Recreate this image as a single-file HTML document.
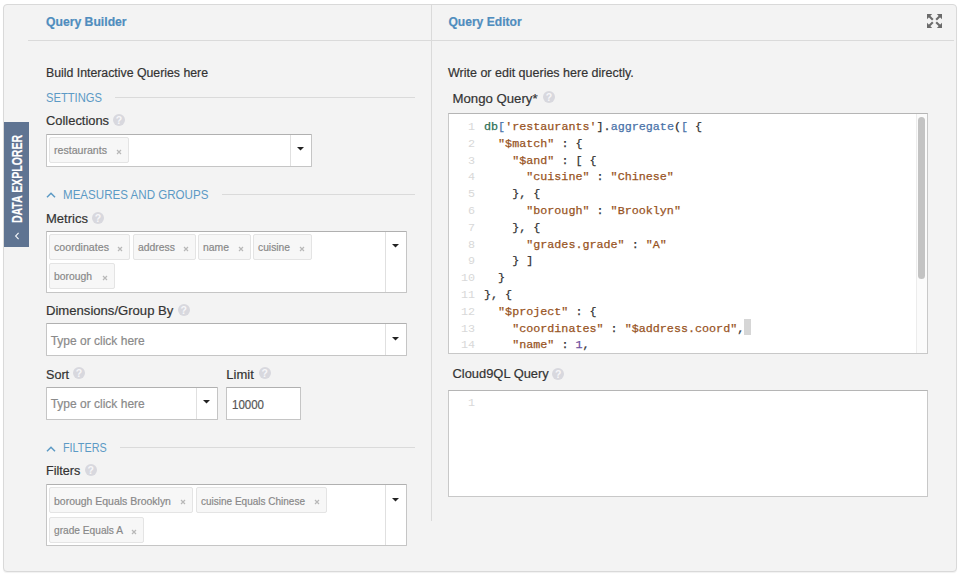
<!DOCTYPE html>
<html><head><meta charset="utf-8">
<style>
html,body{margin:0;padding:0;background:#fff;}
body{width:960px;height:574px;position:relative;overflow:hidden;font-family:"Liberation Sans",sans-serif;}
.t{position:absolute;white-space:nowrap;-webkit-text-stroke:0.2px currentColor;}
.b{position:absolute;}
.cl{position:absolute;left:484px;-webkit-text-stroke:0.25px currentColor;font-family:"Liberation Mono",monospace;font-size:11.72px;line-height:16.8px;white-space:pre;}
.ln{position:absolute;left:450px;width:25px;text-align:right;font-family:"Liberation Mono",monospace;font-size:11.72px;line-height:16.8px;color:#d8d8d8;}
</style></head><body>
<div class="b" style="left:3px;top:4px;width:954px;height:568px;background:#f3f3f3;border:1px solid #d9d9d9;border-radius:4px;box-sizing:border-box;box-shadow:0 1px 1px rgba(0,0,0,0.06);"></div>
<div class="b" style="left:28px;top:40px;width:926px;height:1px;background:#dadada;"></div>
<div class="b" style="left:431px;top:5px;width:1px;height:516px;background:#dadada;"></div>
<div class="b" style="left:4px;top:122px;width:25px;height:125px;background:#5f7492;"></div>
<div class="t" style="left:17px;top:179px;width:0;height:0;"><div style="position:absolute;left:0;top:0;transform:translate(-50%,-50%) rotate(-90deg) scaleX(0.727);white-space:nowrap;font:bold 14.5px/15px 'Liberation Sans',sans-serif;color:#fff;">DATA EXPLORER</div></div>
<svg class="b" style="left:14px;top:231.5px" width="6" height="8" viewBox="0 0 6 8"><path d="M4.6 0.8 L1.6 4 L4.6 7.2" fill="none" stroke="#f4f6f9" stroke-width="1.1"/></svg>
<div class="t" style="left:46px;top:16.47px;font-size:12.2px;line-height:12.2px;color:#4f8dbe;font-weight:bold;font-family:'Liberation Sans', sans-serif;">Query Builder</div>
<div class="t" style="left:448.4px;top:16.16px;font-size:12.1px;line-height:12.1px;color:#4f8dbe;font-weight:bold;font-family:'Liberation Sans', sans-serif;">Query Editor</div>
<svg class="b" style="left:927px;top:13.8px" width="15" height="14" viewBox="0 0 15 14">
<g fill="#6b6b6b" stroke="#6b6b6b">
<path d="M0 0 H5.2 L0 5.2 Z" stroke="none"/><path d="M1.5 1.5 L5.8 5.8" stroke-width="2.1"/>
<path d="M15 0 H9.8 L15 5.2 Z" stroke="none"/><path d="M13.5 1.5 L9.2 5.8" stroke-width="2.1"/>
<path d="M0 14 H5.2 L0 8.8 Z" stroke="none"/><path d="M1.5 12.5 L5.8 8.2" stroke-width="2.1"/>
<path d="M15 14 H9.8 L15 8.8 Z" stroke="none"/><path d="M13.5 12.5 L9.2 8.2" stroke-width="2.1"/>
</g></svg>
<div class="t" style="left:46px;top:66.89px;font-size:12.3px;line-height:12.3px;color:#333;font-family:'Liberation Sans', sans-serif;">Build Interactive Queries here</div>
<div class="t" style="left:46px;top:91.78px;font-size:12.9px;line-height:12.9px;color:#5c9ac5;font-family:'Liberation Sans', sans-serif;-webkit-text-stroke:0;transform:scaleX(0.8681);transform-origin:0 0;">SETTINGS</div>
<div class="b" style="left:115px;top:97px;width:300px;height:1px;background:#dadada;"></div>
<div class="t" style="left:46px;top:114.88px;font-size:12.9px;line-height:12.9px;color:#333;font-family:'Liberation Sans', sans-serif;">Collections</div>
<div class="b" style="left:113.0px;top:114.0px;width:12px;height:12px;border-radius:50%;background:#d8d8de;color:#f6f6f8;font:bold 10.5px/12.5px 'Liberation Sans',sans-serif;text-align:center;">?</div>
<div class="b" style="left:46px;top:134px;width:266px;height:33px;background:#fff;border:1px solid #c5c5c5;border-top-color:#b0b0b0;box-sizing:border-box;border-radius:1px;"></div>
<div class="b" style="left:290px;top:135px;width:1px;height:31px;background:#e0e0e0;"></div>
<svg class="b" style="left:297px;top:146.8px" width="7" height="4" viewBox="0 0 7 4"><path d="M0 0 H7 L3.5 3.6 Z" fill="#222"/></svg>
<div class="b" style="left:49px;top:137px;width:80px;height:26px;background:#f7f7f7;border:1px solid #e4e4e4;box-sizing:border-box;border-radius:2px;"></div>
<div class="t" style="left:54.0px;top:144.18px;font-size:11.6px;line-height:11.6px;color:#888888;font-family:'Liberation Sans', sans-serif;transform:scaleX(0.9133);transform-origin:0 0;">restaurants</div>
<svg class="b" style="left:116.2px;top:148.5px" width="6" height="6" viewBox="0 0 6 6"><path d="M1 1 L5 5 M5 1 L1 5" stroke="#b8b8b8" stroke-width="1.2"/></svg>
<svg class="b" style="left:45.7px;top:192.1px" width="10" height="6" viewBox="0 0 10 6"><path d="M1 5.2 L5 1.2 L9 5.2" fill="none" stroke="#5c9ac5" stroke-width="1.5"/></svg>
<div class="t" style="left:63px;top:188.63px;font-size:12.9px;line-height:12.9px;color:#5c9ac5;font-family:'Liberation Sans', sans-serif;-webkit-text-stroke:0;transform:scaleX(0.8981);transform-origin:0 0;">MEASURES AND GROUPS</div>
<div class="b" style="left:222px;top:194px;width:193px;height:1px;background:#dadada;"></div>
<div class="t" style="left:46px;top:211.80px;font-size:13px;line-height:13px;color:#333;font-family:'Liberation Sans', sans-serif;">Metrics</div>
<div class="b" style="left:92.0px;top:211.5px;width:12px;height:12px;border-radius:50%;background:#d8d8de;color:#f6f6f8;font:bold 10.5px/12.5px 'Liberation Sans',sans-serif;text-align:center;">?</div>
<div class="b" style="left:46px;top:231px;width:361px;height:62px;background:#fff;border:1px solid #c5c5c5;border-top-color:#b0b0b0;box-sizing:border-box;border-radius:1px;"></div>
<div class="b" style="left:385px;top:232px;width:1px;height:60px;background:#e0e0e0;"></div>
<svg class="b" style="left:392px;top:243.8px" width="7" height="4" viewBox="0 0 7 4"><path d="M0 0 H7 L3.5 3.6 Z" fill="#222"/></svg>
<div class="b" style="left:49px;top:234px;width:81px;height:26px;background:#f7f7f7;border:1px solid #e4e4e4;box-sizing:border-box;border-radius:2px;"></div>
<div class="t" style="left:54.0px;top:241.18px;font-size:11.6px;line-height:11.6px;color:#888888;font-family:'Liberation Sans', sans-serif;transform:scaleX(0.9171);transform-origin:0 0;">coordinates</div>
<svg class="b" style="left:117.2px;top:245.5px" width="6" height="6" viewBox="0 0 6 6"><path d="M1 1 L5 5 M5 1 L1 5" stroke="#b8b8b8" stroke-width="1.2"/></svg>
<div class="b" style="left:133px;top:234px;width:62.5px;height:26px;background:#f7f7f7;border:1px solid #e4e4e4;box-sizing:border-box;border-radius:2px;"></div>
<div class="t" style="left:137.5px;top:241.18px;font-size:11.6px;line-height:11.6px;color:#888888;font-family:'Liberation Sans', sans-serif;transform:scaleX(0.8966);transform-origin:0 0;">address</div>
<svg class="b" style="left:182.7px;top:245.5px" width="6" height="6" viewBox="0 0 6 6"><path d="M1 1 L5 5 M5 1 L1 5" stroke="#b8b8b8" stroke-width="1.2"/></svg>
<div class="b" style="left:198px;top:234px;width:52.6px;height:26px;background:#f7f7f7;border:1px solid #e4e4e4;box-sizing:border-box;border-radius:2px;"></div>
<div class="t" style="left:202.5px;top:241.18px;font-size:11.6px;line-height:11.6px;color:#888888;font-family:'Liberation Sans', sans-serif;transform:scaleX(0.8960);transform-origin:0 0;">name</div>
<svg class="b" style="left:237.79999999999998px;top:245.5px" width="6" height="6" viewBox="0 0 6 6"><path d="M1 1 L5 5 M5 1 L1 5" stroke="#b8b8b8" stroke-width="1.2"/></svg>
<div class="b" style="left:253px;top:234px;width:59px;height:26px;background:#f7f7f7;border:1px solid #e4e4e4;box-sizing:border-box;border-radius:2px;"></div>
<div class="t" style="left:257.5px;top:241.18px;font-size:11.6px;line-height:11.6px;color:#888888;font-family:'Liberation Sans', sans-serif;transform:scaleX(0.8862);transform-origin:0 0;">cuisine</div>
<svg class="b" style="left:299.2px;top:245.5px" width="6" height="6" viewBox="0 0 6 6"><path d="M1 1 L5 5 M5 1 L1 5" stroke="#b8b8b8" stroke-width="1.2"/></svg>
<div class="b" style="left:49px;top:263px;width:66px;height:26px;background:#f7f7f7;border:1px solid #e4e4e4;box-sizing:border-box;border-radius:2px;"></div>
<div class="t" style="left:54.0px;top:270.18px;font-size:11.6px;line-height:11.6px;color:#888888;font-family:'Liberation Sans', sans-serif;transform:scaleX(0.8926);transform-origin:0 0;">borough</div>
<svg class="b" style="left:102.2px;top:274.5px" width="6" height="6" viewBox="0 0 6 6"><path d="M1 1 L5 5 M5 1 L1 5" stroke="#b8b8b8" stroke-width="1.2"/></svg>
<div class="t" style="left:46px;top:303.71px;font-size:13.1px;line-height:13.1px;color:#333;font-family:'Liberation Sans', sans-serif;">Dimensions/Group By</div>
<div class="b" style="left:177.7px;top:304.0px;width:12px;height:12px;border-radius:50%;background:#d8d8de;color:#f6f6f8;font:bold 10.5px/12.5px 'Liberation Sans',sans-serif;text-align:center;">?</div>
<div class="b" style="left:46px;top:323px;width:361px;height:33px;background:#fff;border:1px solid #c5c5c5;border-top-color:#b0b0b0;box-sizing:border-box;border-radius:1px;"></div>
<div class="b" style="left:385px;top:324px;width:1px;height:31px;background:#e0e0e0;"></div>
<svg class="b" style="left:392px;top:336.8px" width="7" height="4" viewBox="0 0 7 4"><path d="M0 0 H7 L3.5 3.6 Z" fill="#222"/></svg>
<div class="t" style="left:50.7px;top:334.84px;font-size:12px;line-height:12px;color:#8a8a8a;font-family:'Liberation Sans', sans-serif;">Type or click here</div>
<div class="t" style="left:46px;top:368.53px;font-size:12.6px;line-height:12.6px;color:#333;font-family:'Liberation Sans', sans-serif;">Sort</div>
<div class="b" style="left:73.0px;top:367.3px;width:12px;height:12px;border-radius:50%;background:#d8d8de;color:#f6f6f8;font:bold 10.5px/12.5px 'Liberation Sans',sans-serif;text-align:center;">?</div>
<div class="t" style="left:226.3px;top:368.20px;font-size:13px;line-height:13px;color:#333;font-family:'Liberation Sans', sans-serif;">Limit</div>
<div class="b" style="left:258.7px;top:367.3px;width:12px;height:12px;border-radius:50%;background:#d8d8de;color:#f6f6f8;font:bold 10.5px/12.5px 'Liberation Sans',sans-serif;text-align:center;">?</div>
<div class="b" style="left:46px;top:387px;width:172px;height:33px;background:#fff;border:1px solid #c5c5c5;border-top-color:#b0b0b0;box-sizing:border-box;border-radius:1px;"></div>
<div class="b" style="left:196px;top:388px;width:1px;height:31px;background:#e0e0e0;"></div>
<svg class="b" style="left:203px;top:399.7px" width="7" height="4" viewBox="0 0 7 4"><path d="M0 0 H7 L3.5 3.6 Z" fill="#222"/></svg>
<div class="t" style="left:50.7px;top:398.44px;font-size:12px;line-height:12px;color:#8a8a8a;font-family:'Liberation Sans', sans-serif;">Type or click here</div>
<div class="b" style="left:226px;top:387px;width:74.5px;height:33px;background:#fff;border:1px solid #c5c5c5;border-top-color:#b0b0b0;box-sizing:border-box;"></div>
<div class="t" style="left:231.7px;top:398.83px;font-size:12.6px;line-height:12.6px;color:#555;font-family:'Liberation Sans', sans-serif;transform:scaleX(0.9133);transform-origin:0 0;">10000</div>
<svg class="b" style="left:45.7px;top:446.2px" width="10" height="6" viewBox="0 0 10 6"><path d="M1 5.2 L5 1.2 L9 5.2" fill="none" stroke="#5c9ac5" stroke-width="1.5"/></svg>
<div class="t" style="left:63px;top:442.08px;font-size:12.9px;line-height:12.9px;color:#5c9ac5;font-family:'Liberation Sans', sans-serif;-webkit-text-stroke:0;transform:scaleX(0.8390);transform-origin:0 0;">FILTERS</div>
<div class="b" style="left:120px;top:447px;width:295px;height:1px;background:#dadada;"></div>
<div class="t" style="left:46px;top:465.43px;font-size:12.6px;line-height:12.6px;color:#333;font-family:'Liberation Sans', sans-serif;">Filters</div>
<div class="b" style="left:84.8px;top:464.0px;width:12px;height:12px;border-radius:50%;background:#d8d8de;color:#f6f6f8;font:bold 10.5px/12.5px 'Liberation Sans',sans-serif;text-align:center;">?</div>
<div class="b" style="left:46px;top:484px;width:361px;height:62px;background:#fff;border:1px solid #c5c5c5;border-top-color:#b0b0b0;box-sizing:border-box;border-radius:1px;"></div>
<div class="b" style="left:385px;top:485px;width:1px;height:60px;background:#e0e0e0;"></div>
<svg class="b" style="left:392px;top:497.6px" width="7" height="4" viewBox="0 0 7 4"><path d="M0 0 H7 L3.5 3.6 Z" fill="#222"/></svg>
<div class="b" style="left:49px;top:487.4px;width:143.8px;height:26px;background:#f7f7f7;border:1px solid #e4e4e4;box-sizing:border-box;border-radius:2px;"></div>
<div class="t" style="left:54.0px;top:494.58px;font-size:11.6px;line-height:11.6px;color:#888888;font-family:'Liberation Sans', sans-serif;transform:scaleX(0.9027);transform-origin:0 0;">borough Equals Brooklyn</div>
<svg class="b" style="left:180.0px;top:498.9px" width="6" height="6" viewBox="0 0 6 6"><path d="M1 1 L5 5 M5 1 L1 5" stroke="#b8b8b8" stroke-width="1.2"/></svg>
<div class="b" style="left:196px;top:487.4px;width:131px;height:26px;background:#f7f7f7;border:1px solid #e4e4e4;box-sizing:border-box;border-radius:2px;"></div>
<div class="t" style="left:200.5px;top:494.58px;font-size:11.6px;line-height:11.6px;color:#888888;font-family:'Liberation Sans', sans-serif;transform:scaleX(0.8625);transform-origin:0 0;">cuisine Equals Chinese</div>
<svg class="b" style="left:314.2px;top:498.9px" width="6" height="6" viewBox="0 0 6 6"><path d="M1 1 L5 5 M5 1 L1 5" stroke="#b8b8b8" stroke-width="1.2"/></svg>
<div class="b" style="left:49px;top:517px;width:94.5px;height:26px;background:#f7f7f7;border:1px solid #e4e4e4;box-sizing:border-box;border-radius:2px;"></div>
<div class="t" style="left:54.0px;top:524.18px;font-size:11.6px;line-height:11.6px;color:#888888;font-family:'Liberation Sans', sans-serif;transform:scaleX(0.8770);transform-origin:0 0;">grade Equals A</div>
<svg class="b" style="left:130.7px;top:528.5px" width="6" height="6" viewBox="0 0 6 6"><path d="M1 1 L5 5 M5 1 L1 5" stroke="#b8b8b8" stroke-width="1.2"/></svg>
<div class="t" style="left:448px;top:67.22px;font-size:12.5px;line-height:12.5px;color:#333;font-family:'Liberation Sans', sans-serif;">Write or edit queries here directly.</div>
<div class="t" style="left:452.5px;top:92.13px;font-size:13.2px;line-height:13.2px;color:#333;font-family:'Liberation Sans', sans-serif;">Mongo Query*</div>
<div class="b" style="left:543.0px;top:91.0px;width:12px;height:12px;border-radius:50%;background:#d8d8de;color:#f6f6f8;font:bold 10.5px/12.5px 'Liberation Sans',sans-serif;text-align:center;">?</div>
<div class="b" style="left:448px;top:113px;width:480px;height:241px;background:#fff;border:1px solid #c8c8c8;border-top-color:#b5b5b5;box-sizing:border-box;"></div>
<div class="b" style="left:915.5px;top:114px;width:11px;height:239px;background:#fbfbfb;border-left:1px solid #ececec;box-sizing:border-box;"></div>
<div class="b" style="left:918.2px;top:116.7px;width:6.8px;height:162px;background:#c3c3c3;border-radius:4px;"></div>
<div class="b" style="left:0;top:0;width:960px;height:353px;overflow:hidden;clip-path:inset(114px 0 0 0);"><div class="cl" style="top:119.08px"><span style="color:#2e7056">db</span><span style="color:#4a72a8">[</span><span style="color:#98541f">&#x27;restaurants&#x27;</span><span style="color:#333">]</span><span style="color:#333">.</span><span style="color:#4a72a8">aggregate</span><span style="color:#333">(</span><span style="color:#4a72a8">[</span><span style="color:#333">&nbsp;</span><span style="color:#333">{</span></div><div class="ln" style="top:119.08px">1</div><div class="cl" style="top:135.88px"><span style="color:#333">&nbsp;&nbsp;</span><span style="color:#98541f">&quot;$match&quot;</span><span style="color:#333">&nbsp;:&nbsp;{</span></div><div class="ln" style="top:135.88px">2</div><div class="cl" style="top:152.68px"><span style="color:#333">&nbsp;&nbsp;&nbsp;&nbsp;</span><span style="color:#98541f">&quot;$and&quot;</span><span style="color:#333">&nbsp;:&nbsp;[&nbsp;{</span></div><div class="ln" style="top:152.68px">3</div><div class="cl" style="top:169.48px"><span style="color:#333">&nbsp;&nbsp;&nbsp;&nbsp;&nbsp;&nbsp;</span><span style="color:#98541f">&quot;cuisine&quot;</span><span style="color:#333">&nbsp;:&nbsp;</span><span style="color:#98541f">&quot;Chinese&quot;</span></div><div class="ln" style="top:169.48px">4</div><div class="cl" style="top:186.28px"><span style="color:#333">&nbsp;&nbsp;&nbsp;&nbsp;},&nbsp;{</span></div><div class="ln" style="top:186.28px">5</div><div class="cl" style="top:203.08px"><span style="color:#333">&nbsp;&nbsp;&nbsp;&nbsp;&nbsp;&nbsp;</span><span style="color:#98541f">&quot;borough&quot;</span><span style="color:#333">&nbsp;:&nbsp;</span><span style="color:#98541f">&quot;Brooklyn&quot;</span></div><div class="ln" style="top:203.08px">6</div><div class="cl" style="top:219.88px"><span style="color:#333">&nbsp;&nbsp;&nbsp;&nbsp;},&nbsp;{</span></div><div class="ln" style="top:219.88px">7</div><div class="cl" style="top:236.68px"><span style="color:#333">&nbsp;&nbsp;&nbsp;&nbsp;&nbsp;&nbsp;</span><span style="color:#98541f">&quot;grades.grade&quot;</span><span style="color:#333">&nbsp;:&nbsp;</span><span style="color:#98541f">&quot;A&quot;</span></div><div class="ln" style="top:236.68px">8</div><div class="cl" style="top:253.48px"><span style="color:#333">&nbsp;&nbsp;&nbsp;&nbsp;}&nbsp;]</span></div><div class="ln" style="top:253.48px">9</div><div class="cl" style="top:270.28px"><span style="color:#333">&nbsp;&nbsp;}</span></div><div class="ln" style="top:270.28px">10</div><div class="cl" style="top:287.08px"><span style="color:#333">},&nbsp;{</span></div><div class="ln" style="top:287.08px">11</div><div class="cl" style="top:303.88px"><span style="color:#333">&nbsp;&nbsp;</span><span style="color:#98541f">&quot;$project&quot;</span><span style="color:#333">&nbsp;:&nbsp;{</span></div><div class="ln" style="top:303.88px">12</div><div class="cl" style="top:320.68px"><span style="color:#333">&nbsp;&nbsp;&nbsp;&nbsp;</span><span style="color:#98541f">&quot;coordinates&quot;</span><span style="color:#333">&nbsp;:&nbsp;</span><span style="color:#98541f">&quot;$address.coord&quot;</span><span style="color:#333">,</span></div><div class="ln" style="top:320.68px">13</div><div class="cl" style="top:337.48px"><span style="color:#333">&nbsp;&nbsp;&nbsp;&nbsp;</span><span style="color:#98541f">&quot;name&quot;</span><span style="color:#333">&nbsp;:&nbsp;</span><span style="color:#6c4fa0">1</span><span style="color:#333">,</span></div><div class="ln" style="top:337.48px">14</div></div>
<div class="b" style="left:744px;top:318.5px;width:7px;height:16.5px;background:#d6d6d6;"></div>
<div class="t" style="left:452.5px;top:368.18px;font-size:12.9px;line-height:12.9px;color:#333;font-family:'Liberation Sans', sans-serif;">Cloud9QL Query</div>
<div class="b" style="left:552.3px;top:367.7px;width:12px;height:12px;border-radius:50%;background:#d8d8de;color:#f6f6f8;font:bold 10.5px/12.5px 'Liberation Sans',sans-serif;text-align:center;">?</div>
<div class="b" style="left:448px;top:389.7px;width:480px;height:107px;background:#fff;border:1px solid #c8c8c8;border-top-color:#b5b5b5;box-sizing:border-box;"></div>
<div class="ln" style="top:395.28px">1</div>
</body></html>
